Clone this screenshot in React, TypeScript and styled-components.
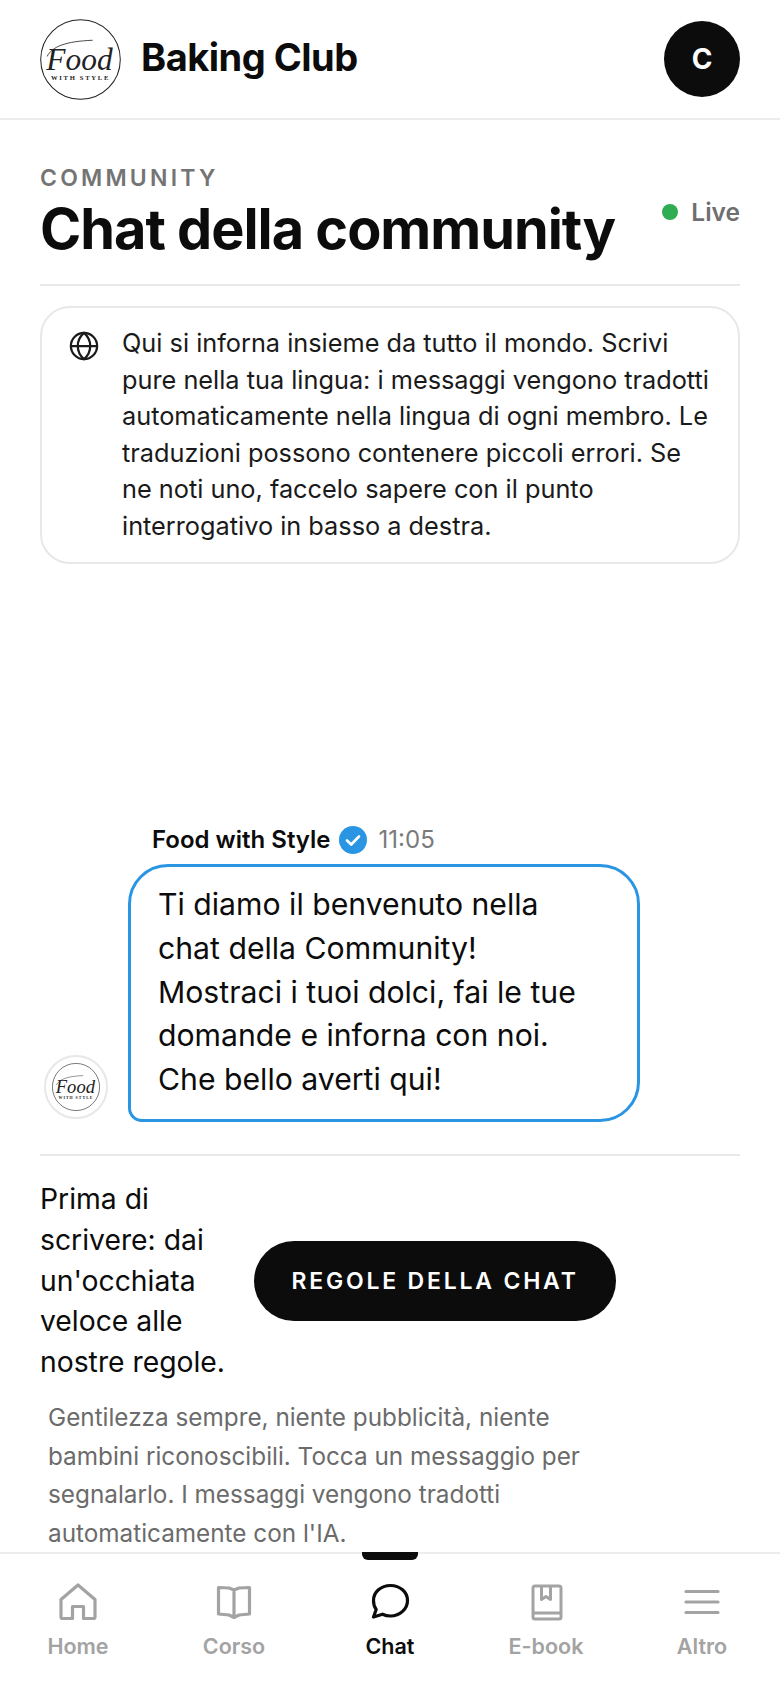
import styled, { createGlobalStyle } from 'styled-components';

const GlobalStyle = createGlobalStyle`
	* {
		box-sizing: border-box;
	}
	html,
	body {
		margin: 0;
		padding: 0;
		background: #fff;
		font-family: Inter, 'Liberation Sans', sans-serif;
	}
`;

const Page = styled.div`
	width: 780px;
	height: 1688px;
	display: flex;
	flex-direction: column;
	overflow: hidden;
	background: #fff;
	color: #0c0c0c;
`;

const Header = styled.header`
	height: 120px;
	flex: none;
	display: flex;
	align-items: center;
	justify-content: space-between;
	padding: 0 40px;
	border-bottom: 2px solid #ececec;
`;
const Brand = styled.div`
	display: flex;
	align-items: center;
	gap: 20px;
`;
const BrandName = styled.span`
	font-size: 38px;
	line-height: 44px;
	margin-top: -4px;
	font-weight: 700;
	letter-spacing: -0.5px;
`;
const UserBadge = styled.div`
	width: 76px;
	height: 76px;
	border-radius: 50%;
	background: #0c0c0c;
	color: #fff;
	display: flex;
	align-items: center;
	justify-content: center;
	font-size: 28px;
	font-weight: 700;
`;

const Main = styled.main`
	flex: 1;
	min-height: 0;
	display: flex;
	flex-direction: column;
	padding: 44px 40px 0;
`;
const TitleRow = styled.div`
	display: flex;
	align-items: flex-start;
	justify-content: space-between;
	padding-bottom: 18px;
	border-bottom: 2px solid #e8e8e8;
`;
const Eyebrow = styled.div`
	font-size: 23px;
	line-height: 28px;
	font-weight: 600;
	letter-spacing: 3.2px;
	color: #747474;
`;
const Title = styled.h1`
	margin: 0;
	font-size: 55.8px;
	line-height: 74px;
	font-weight: 700;
	letter-spacing: -1px;
	white-space: nowrap;
`;
const LiveTag = styled.div`
	display: flex;
	align-items: center;
	gap: 13px;
	margin-top: 32px;
	font-size: 24.5px;
	line-height: 32px;
	font-weight: 600;
	color: #6f6f6f;
`;
const LiveDot = styled.span`
	width: 16px;
	height: 16px;
	border-radius: 50%;
	background: #2fad53;
`;

const InfoCard = styled.div`
	margin-top: 20px;
	display: flex;
	gap: 23px;
	padding: 17px 26px 17px 27px;
	border: 2px solid #e8e8e8;
	border-radius: 30px;
	font-size: 25.3px;
	line-height: 36.6px;
	color: #1a1a1a;
	svg {
		flex: none;
		margin-top: 6px;
	}
`;

const Messages = styled.div`
	flex: 1;
	min-height: 0;
	display: flex;
	align-items: flex-end;
	gap: 20px;
	padding: 0 0 32px 4px;
`;
const AuthorAvatar = styled.div`
	flex: none;
	width: 64px;
	height: 64px;
	margin-bottom: 3px;
	border-radius: 50%;
	border: 2px solid #e8e8e8;
	display: flex;
	align-items: center;
	justify-content: center;
`;
const MessageBody = styled.div`
	width: 512px;
`;
const MessageMeta = styled.div`
	display: flex;
	align-items: center;
	gap: 8px;
	margin: 0 0 8px 24px;
	font-size: 24px;
	line-height: 32px;
`;
const AuthorName = styled.span`
	font-weight: 600;
`;
const MessageTime = styled.span`
	margin-left: 4px;
	color: #7a7a7a;
`;
const Bubble = styled.div`
	padding: 16px 50px 18px 27px;
	border: 3px solid #2a96e3;
	border-radius: 40px 40px 40px 14px;
	font-size: 30.2px;
	line-height: 43.6px;
	color: #0c0c0c;
`;

const RulesBar = styled.section`
	flex: none;
	border-top: 2px solid #e8e8e8;
	padding-top: 23px;
`;
const RulesRow = styled.div`
	display: flex;
	align-items: center;
	gap: 22px;
`;
const RulesLead = styled.p`
	margin: 0;
	width: 192px;
	flex: none;
	font-size: 28.3px;
	line-height: 40.6px;
`;
const RulesButton = styled.button`
	width: 362px;
	height: 80px;
	border: 0;
	border-radius: 40px;
	background: #0c0c0c;
	color: #fff;
	font-family: inherit;
	font-size: 23px;
	font-weight: 600;
	letter-spacing: 2.8px;
`;
const RulesNote = styled.p`
	margin: 16px 0 0 8px;
	width: 560px;
	font-size: 24.3px;
	line-height: 38.4px;
	color: #6b6b6b;
`;

const BottomNav = styled.nav`
	position: relative;
	height: 136px;
	flex: none;
	display: grid;
	grid-template-columns: repeat(5, 1fr);
	border-top: 2px solid #ececec;
	background: #fff;
`;
const NavItem = styled.div<{ $active?: boolean }>`
	position: relative;
	display: flex;
	flex-direction: column;
	align-items: center;
	padding-top: 28px;
	font-size: 21.5px;
	line-height: 30px;
	font-weight: 600;
	color: ${(p) => (p.$active ? '#0c0c0c' : '#a3a3a3')};
	svg {
		margin-bottom: 9px;
	}
`;
const ActiveMark = styled.span`
	position: absolute;
	top: -2px;
	left: 50%;
	width: 56px;
	height: 8px;
	margin-left: -28px;
	background: #0c0c0c;
	border-radius: 0 0 6px 6px;
`;

function Logo({ size }: { size: number }) {
	return (
		<svg width={size} height={size} viewBox="0 0 80 80">
			<circle cx="40" cy="40" r="39.3" fill="#fff" stroke="#222" strokeWidth="1" />
			<path
				d="M7 37 C 12 27, 26 22, 52 21"
				fill="none"
				stroke="#222"
				strokeWidth="0.8"
			/>
			<text
				x="39"
				y="50"
				textAnchor="middle"
				fontFamily="'Liberation Serif', serif"
				fontStyle="italic"
				fontSize="31"
				fill="#222"
			>
				Food
			</text>
			<text
				x="40"
				y="60"
				textAnchor="middle"
				fontFamily="'Liberation Serif', serif"
				fontWeight="700"
				fontSize="6.500"
				letterSpacing="1.700"
				fill="#222"
			>
				WITH STYLE
			</text>
		</svg>
	);
}

function iconProps(strokeWidth = 3.2) {
	return {
		width: 40,
		height: 40,
		viewBox: '0 0 40 40',
		fill: 'none',
		stroke: 'currentColor',
		strokeWidth,
		strokeLinecap: 'round' as const,
		strokeLinejoin: 'round' as const,
	};
}

const HomeIcon = () => (
	<svg {...iconProps()}>
		<path d="M3 17.500 20 3l17 14.500V35a1.500 1.500 0 0 1-1.500 1.500H25.500V24.500h-11v12H4.500A1.500 1.500 0 0 1 3 35Z" />
	</svg>
);
const BookIcon = () => (
	<svg {...iconProps()}>
		<path d="M20 8 15 6 4.500 5.500V32L15 33l5 2.500L25 33l10.500-1V5.500L25 6ZM20 8v27.500" />
	</svg>
);
const ChatIcon = () => (
	<svg {...iconProps()}>
		<path d="M20.500 3.500C30 3.500 37.500 10 37.500 18.500S30 34 20.500 34c-3 0-5.500-.6-8-1.800L3.500 35l2.700-7.500C4.200 25 3.500 21.500 3.500 18.500 3.500 10 11 3.500 20.500 3.500Z" />
	</svg>
);
const EbookIcon = () => (
	<svg {...iconProps(3)}>
		<path d="M7 33V6a2 2 0 0 1 2-2h24a2 2 0 0 1 2 2v29a2 2 0 0 1-2 2H9a2 2 0 0 1-2-2v-2Zm0 0a2 2 0 0 1 2-2h26" />
		<path d="M15.500 4v13.500l4.500-3 4.500 3V4" strokeLinecap="butt" />
	</svg>
);
const MenuIcon = () => (
	<svg {...iconProps()}>
		<path d="M4 9.500h32M4 20h32M4 30.500h32" />
	</svg>
);

const NAV_ITEMS = [
	{ label: 'Home', icon: <HomeIcon /> },
	{ label: 'Corso', icon: <BookIcon /> },
	{ label: 'Chat', icon: <ChatIcon />, active: true },
	{ label: 'E-book', icon: <EbookIcon /> },
	{ label: 'Altro', icon: <MenuIcon /> },
];

export default function App() {
	return (
		<Page>
			<GlobalStyle />
			<Header>
				<Brand>
					<Logo size={81} />
					<BrandName>Baking Club</BrandName>
				</Brand>
				<UserBadge>C</UserBadge>
			</Header>
			<Main>
				<TitleRow>
					<div>
						<Eyebrow>COMMUNITY</Eyebrow>
						<Title>Chat della community</Title>
					</div>
					<LiveTag>
						<LiveDot />
						Live
					</LiveTag>
				</TitleRow>
				<InfoCard>
					<svg
						width="30"
						height="30"
						viewBox="0 0 24 24"
						fill="none"
						stroke="#1a1a1a"
						strokeWidth="1.800"
					>
						<circle cx="12" cy="12" r="10.500" />
						<path d="M1.500 12h21M12 1.500c3.500 3 5 6.500 5 10.500s-1.500 7.500-5 10.500c-3.500-3-5-6.500-5-10.500s1.500-7.500 5-10.500Z" />
					</svg>
					<div>
						Qui si inforna insieme da tutto il mondo. Scrivi pure nella tua
						lingua: i messaggi vengono tradotti automaticamente nella lingua di
						ogni membro. Le traduzioni possono contenere piccoli errori. Se ne
						noti uno, faccelo sapere con il punto interrogativo in basso a
						destra.
					</div>
				</InfoCard>
				<Messages>
					<AuthorAvatar>
						<Logo size={48} />
					</AuthorAvatar>
					<MessageBody>
						<MessageMeta>
							<AuthorName>Food with Style</AuthorName>
							<svg width="28" height="28" viewBox="0 0 28 28">
								<circle cx="14" cy="14" r="14" fill="#2a96e3" />
								<path
									d="M8 14.500l4.200 4L20 10.500"
									fill="none"
									stroke="#fff"
									strokeWidth="2.600"
									strokeLinecap="round"
									strokeLinejoin="round"
								/>
							</svg>
							<MessageTime>11:05</MessageTime>
						</MessageMeta>
						<Bubble>
							Ti diamo il benvenuto nella chat della Community! Mostraci i tuoi
							dolci, fai le tue domande e inforna con noi. Che bello averti qui!
						</Bubble>
					</MessageBody>
				</Messages>
				<RulesBar>
					<RulesRow>
						<RulesLead>
							Prima di scrivere: dai un'occhiata veloce alle nostre regole.
						</RulesLead>
						<RulesButton>REGOLE DELLA CHAT</RulesButton>
					</RulesRow>
					<RulesNote>
						Gentilezza sempre, niente pubblicità, niente bambini riconoscibili.
						Tocca un messaggio per segnalarlo. I messaggi vengono tradotti
						automaticamente con l'IA.
					</RulesNote>
				</RulesBar>
			</Main>
			<BottomNav>
				{NAV_ITEMS.map((item) => (
					<NavItem key={item.label} $active={item.active}>
						{item.active && <ActiveMark />}
						{item.icon}
						{item.label}
					</NavItem>
				))}
			</BottomNav>
		</Page>
	);
}
